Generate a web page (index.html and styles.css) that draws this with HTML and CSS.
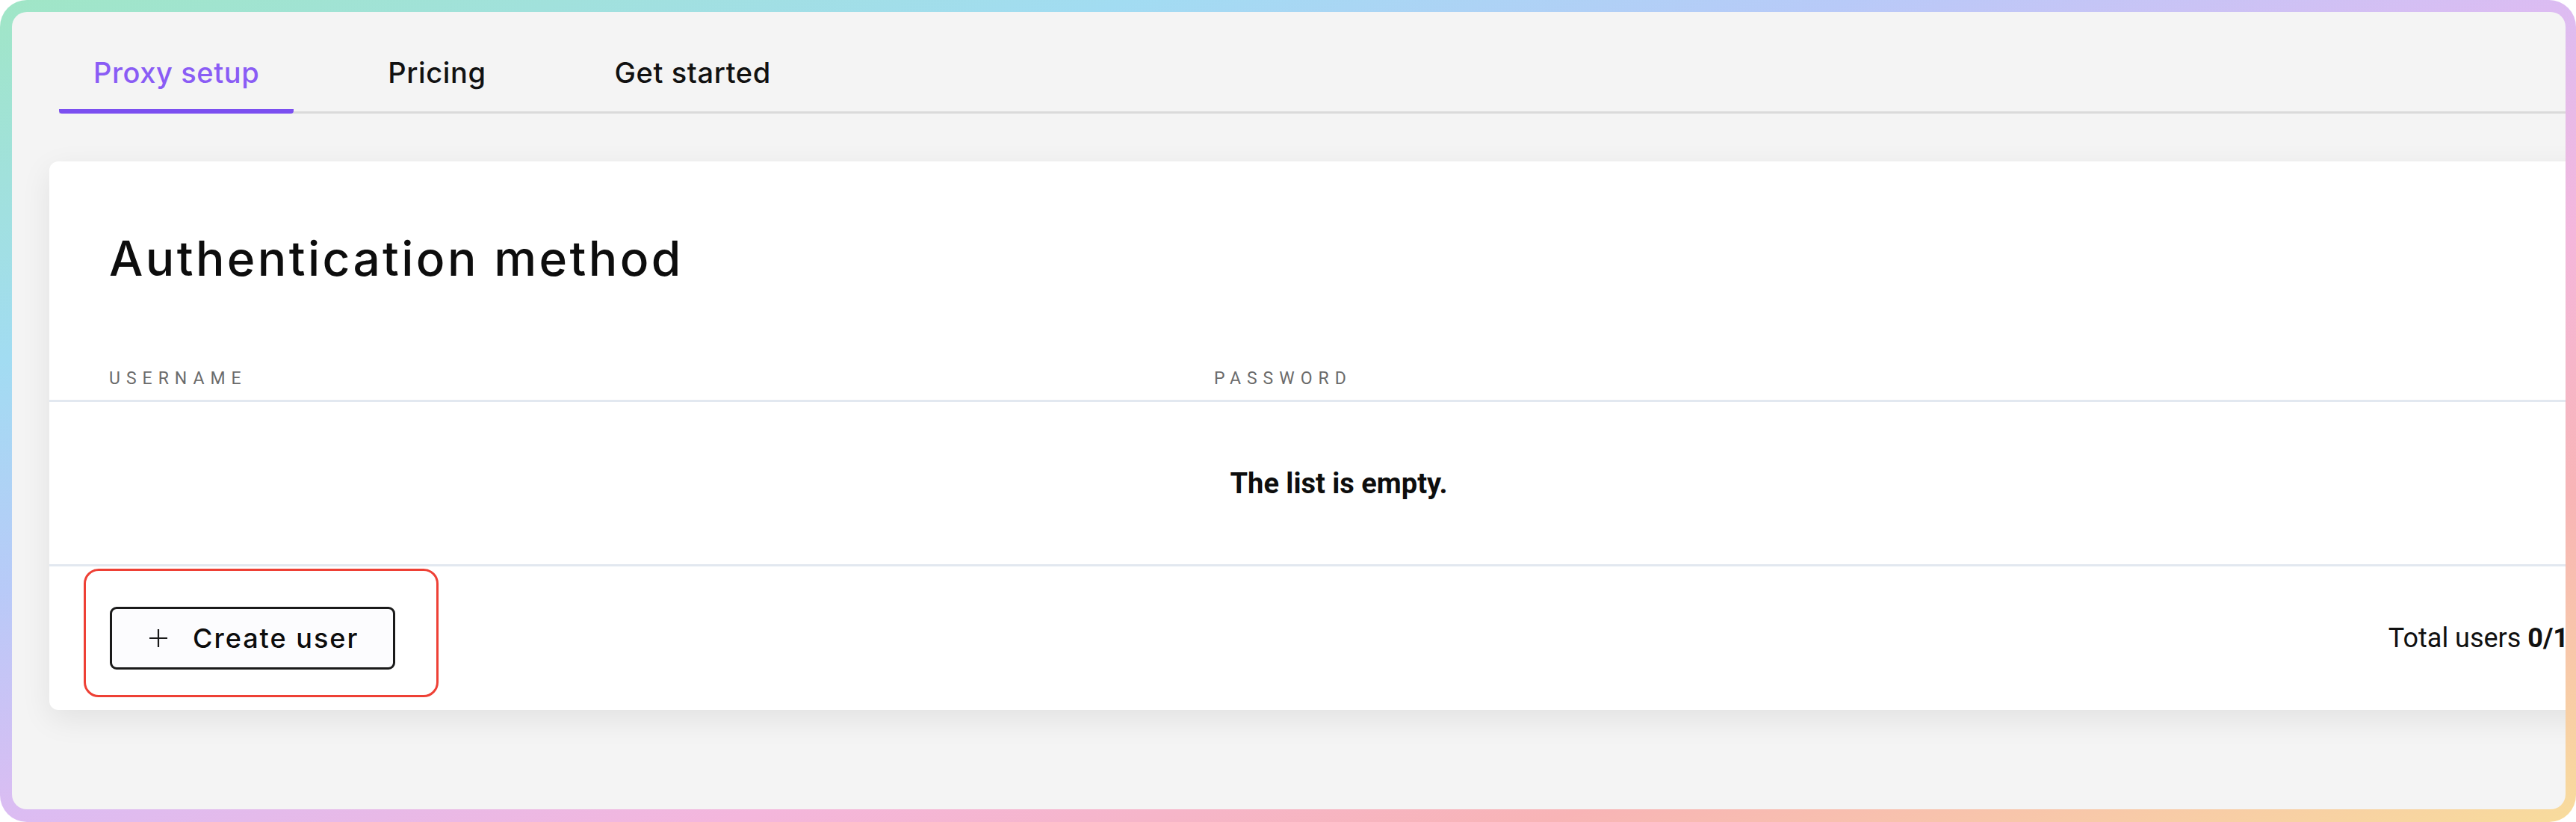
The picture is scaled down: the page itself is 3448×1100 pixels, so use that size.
FILE: index.html
```html
<html>
  <head>
    <link rel="stylesheet" href="styles.css">
  </head>
  <body>
    <div class="frame">
      <div class="panel">
        <div class="tabs">
          <div class="tab active">Proxy setup</div>
          <div class="tab">Pricing</div>
          <div class="tab">Get started</div>
        </div>

        <div class="card">
          <h1 class="card_title">Authentication method</h1>

          <div class="thead">
            <div class="th">Username</div>
            <div class="th">Password</div>
          </div>
          <div class="empty_row">The list is empty.</div>

          <div class="card_footer">
            <button class="btn_create">
              <svg class="plus" width="26" height="26" viewBox="0 0 26 26">
                <path d="M13 1v24M1 13h24" stroke="#1a1a1a" stroke-width="2.2" fill="none"/>
              </svg>
              <span>Create user</span>
            </button>
            <div class="total">Total users <b>0/1</b></div>
            <div class="highlight"></div>
          </div>
        </div>
      </div>
    </div>
  </body>
</html>
```

FILE: styles.css
```css
body {
  margin: 0;
  background: #ffffff;
}

.frame {
  width: 3448px;
  height: 1100px;
  box-sizing: border-box;
  padding: 16px 14px 17px 16px;
  border-radius: 36px;
  background: linear-gradient(to bottom right,
    #a0e6c6 0%,
    #a2dcf2 22%,
    #b8caf8 36%,
    #dcbcf2 50%,
    #f4b6dc 64%,
    #f8b4b6 80%,
    #f8dc9c 100%);
}

.panel {
  height: 100%;
  background: #f4f4f4;
  border-radius: 20px;
  overflow: hidden;
  padding-top: 57px;
  box-sizing: border-box;
}

/* tabs */
.tabs {
  display: flex;
  gap: 80px;
  margin-left: 63px;
  box-shadow: inset 0 -3px 0 #dadada;
}

.tab {
  font-family: Inter, "Noto Sans", sans-serif;
  font-size: 38px;
  font-weight: 500;
  letter-spacing: 0.6px;
  line-height: 48px;
  color: #111111;
  padding: 0 46px 25px 46px;
  border-bottom: 6px solid transparent;
  border-radius: 4px;
}

.tab.active {
  color: #8a5cf5;
  border-bottom-color: #7b4ff0;
}

/* card */
.card {
  position: relative;
  width: 3452px;
  margin: 64px 0 0 50px;
  padding-top: 90px;
  background: #ffffff;
  border-radius: 12px;
  box-shadow: 0 12px 40px rgba(0, 0, 0, 0.08);
}

.card_title {
  margin: 0;
  padding-left: 80px;
  font-family: Inter, "Noto Sans", sans-serif;
  font-size: 64px;
  font-weight: 500;
  letter-spacing: 3.4px;
  line-height: 80px;
  color: #0d0d0d;
}

.thead {
  display: grid;
  grid-template-columns: 1479px 1fr;
  margin-top: 106px;
  padding-bottom: 13px;
  border-bottom: 3px solid #e2e8f0;
}

.th {
  padding-left: 80px;
  font-family: Roboto, "Liberation Sans", sans-serif;
  font-size: 23px;
  line-height: 30px;
  letter-spacing: 8px;
  text-transform: uppercase;
  color: #6b6b6b;
}

.empty_row {
  height: 217px;
  display: flex;
  align-items: center;
  justify-content: center;
  border-bottom: 3px solid #e2e8f0;
  font-family: Roboto, "Liberation Sans", sans-serif;
  font-size: 38px;
  font-weight: 700;
  color: #0d0d0d;
}

.card_footer {
  position: relative;
  display: flex;
  align-items: center;
  justify-content: space-between;
  padding: 54px 80px 54px 81px;
}

.btn_create {
  display: flex;
  align-items: center;
  gap: 33px;
  height: 84px;
  box-sizing: border-box;
  padding: 0 46px 0 49px;
  background: #fcfcfe;
  border: 3px solid #1a1a1a;
  border-radius: 9px;
  font-family: Inter, "Noto Sans", sans-serif;
  font-size: 36px;
  font-weight: 500;
  letter-spacing: 2px;
  color: #0d0d0d;
}

.total {
  font-family: Roboto, "Liberation Sans", sans-serif;
  font-size: 36px;
  color: #111111;
}

.total b {
  font-weight: 700;
}

.highlight {
  position: absolute;
  left: 46px;
  top: 3px;
  width: 475px;
  height: 172px;
  box-sizing: border-box;
  border: 3px solid #ee4035;
  border-radius: 20px;
}
```
